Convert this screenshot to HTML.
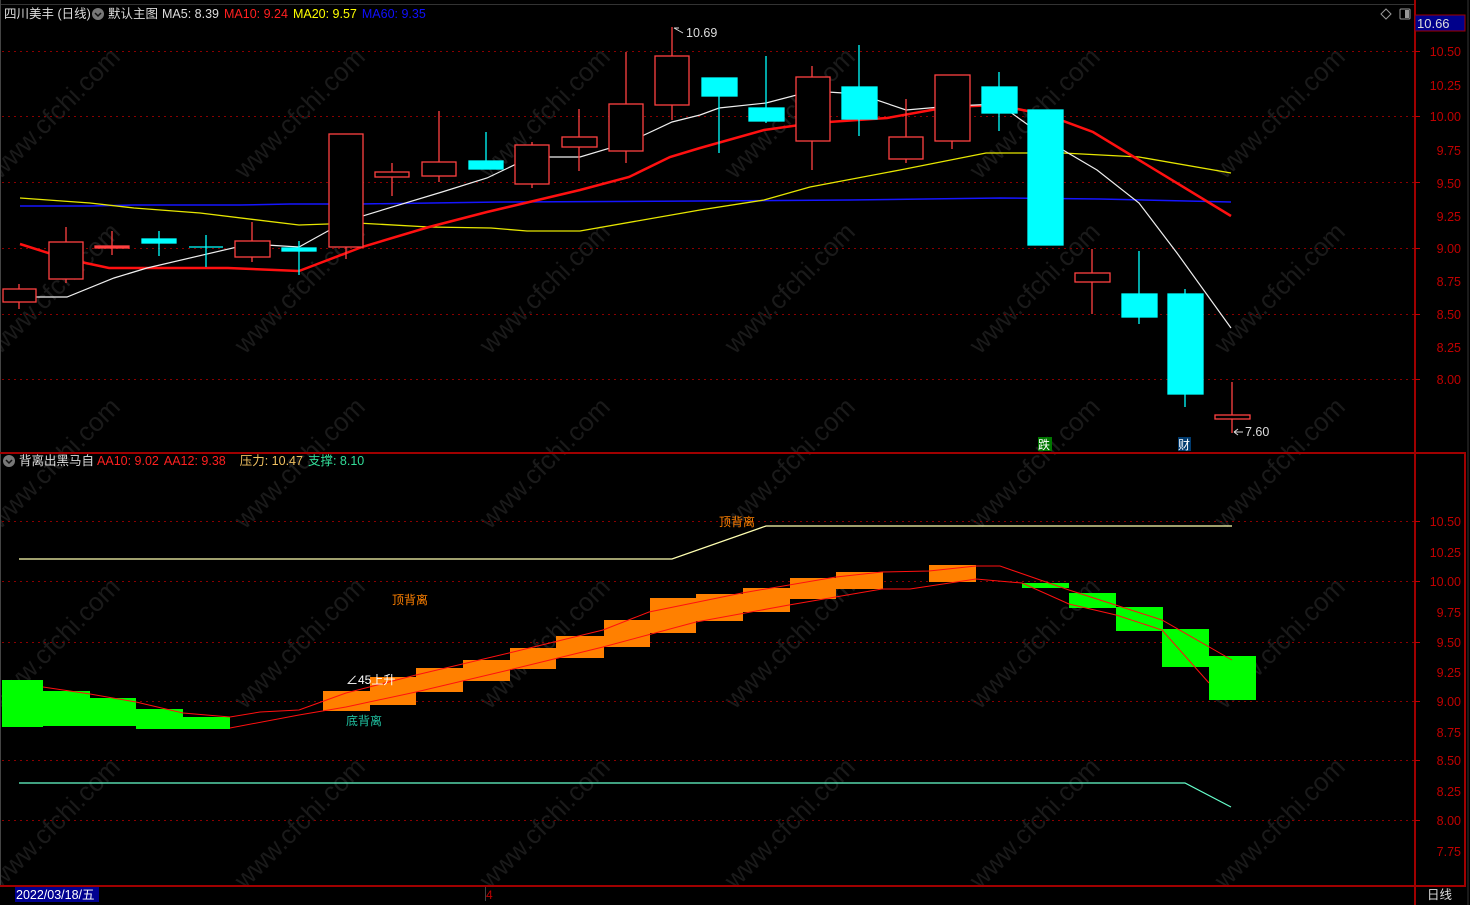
<!DOCTYPE html>
<html><head><meta charset="utf-8"><style>
html,body{margin:0;padding:0;background:#000;width:1470px;height:905px;overflow:hidden}
svg{display:block}
text{font-family:"Liberation Sans","Noto Sans CJK SC",sans-serif}
</style></head><body>
<svg width="1470" height="905" viewBox="0 0 1470 905" xmlns="http://www.w3.org/2000/svg">
<rect width="1470" height="905" fill="#000"/>
<g fill="#1a1a1a" font-size="26" font-family="Liberation Sans,sans-serif">
<text transform="translate(0,180) rotate(-45)">www.cfchi.com</text>
<text transform="translate(245,180) rotate(-45)">www.cfchi.com</text>
<text transform="translate(490,180) rotate(-45)">www.cfchi.com</text>
<text transform="translate(735,180) rotate(-45)">www.cfchi.com</text>
<text transform="translate(980,180) rotate(-45)">www.cfchi.com</text>
<text transform="translate(1225,180) rotate(-45)">www.cfchi.com</text>
<text transform="translate(0,355) rotate(-45)">www.cfchi.com</text>
<text transform="translate(245,355) rotate(-45)">www.cfchi.com</text>
<text transform="translate(490,355) rotate(-45)">www.cfchi.com</text>
<text transform="translate(735,355) rotate(-45)">www.cfchi.com</text>
<text transform="translate(980,355) rotate(-45)">www.cfchi.com</text>
<text transform="translate(1225,355) rotate(-45)">www.cfchi.com</text>
<text transform="translate(0,530) rotate(-45)">www.cfchi.com</text>
<text transform="translate(245,530) rotate(-45)">www.cfchi.com</text>
<text transform="translate(490,530) rotate(-45)">www.cfchi.com</text>
<text transform="translate(735,530) rotate(-45)">www.cfchi.com</text>
<text transform="translate(980,530) rotate(-45)">www.cfchi.com</text>
<text transform="translate(1225,530) rotate(-45)">www.cfchi.com</text>
<text transform="translate(0,710) rotate(-45)">www.cfchi.com</text>
<text transform="translate(245,710) rotate(-45)">www.cfchi.com</text>
<text transform="translate(490,710) rotate(-45)">www.cfchi.com</text>
<text transform="translate(735,710) rotate(-45)">www.cfchi.com</text>
<text transform="translate(980,710) rotate(-45)">www.cfchi.com</text>
<text transform="translate(1225,710) rotate(-45)">www.cfchi.com</text>
<text transform="translate(0,890) rotate(-45)">www.cfchi.com</text>
<text transform="translate(245,890) rotate(-45)">www.cfchi.com</text>
<text transform="translate(490,890) rotate(-45)">www.cfchi.com</text>
<text transform="translate(735,890) rotate(-45)">www.cfchi.com</text>
<text transform="translate(980,890) rotate(-45)">www.cfchi.com</text>
<text transform="translate(1225,890) rotate(-45)">www.cfchi.com</text>
</g>
<line x1="0" y1="4.5" x2="1414" y2="4.5" stroke="#333" stroke-width="1"/>
<line x1="0.5" y1="0" x2="0.5" y2="886" stroke="#444"/>
<g stroke="#8a0000" stroke-dasharray="2,4" stroke-width="1">
<line x1="2" y1="51.5" x2="1414" y2="51.5"/><line x1="2" y1="116.5" x2="1414" y2="116.5"/>
<line x1="2" y1="182.5" x2="1414" y2="182.5"/><line x1="2" y1="248.5" x2="1414" y2="248.5"/>
<line x1="2" y1="314.5" x2="1414" y2="314.5"/><line x1="2" y1="379.5" x2="1414" y2="379.5"/>
<line x1="2" y1="521.5" x2="1414" y2="521.5"/><line x1="2" y1="581.5" x2="1414" y2="581.5"/>
<line x1="2" y1="642.5" x2="1414" y2="642.5"/><line x1="2" y1="701.5" x2="1414" y2="701.5"/>
<line x1="2" y1="760.5" x2="1414" y2="760.5"/><line x1="2" y1="820.5" x2="1414" y2="820.5"/>
</g>
<g stroke="#a00000" stroke-width="2">
<line x1="0" y1="453" x2="1466" y2="453"/>
<line x1="0" y1="886" x2="1466" y2="886"/>
<line x1="1415" y1="0" x2="1415" y2="905"/>
<line x1="1465" y1="453" x2="1465" y2="886"/>
</g>
<line x1="1468" y1="0" x2="1468" y2="905" stroke="#333"/>
<g fill="#c00000" font-size="12.5" text-anchor="end">
<text x="1461" y="56">10.50</text><text x="1461" y="90">10.25</text><text x="1461" y="121">10.00</text>
<text x="1461" y="155">9.75</text><text x="1461" y="188">9.50</text><text x="1461" y="221">9.25</text>
<text x="1461" y="253">9.00</text><text x="1461" y="286">8.75</text><text x="1461" y="319">8.50</text>
<text x="1461" y="352">8.25</text><text x="1461" y="384">8.00</text>
<text x="1461" y="526">10.50</text><text x="1461" y="557">10.25</text><text x="1461" y="586">10.00</text>
<text x="1461" y="617">9.75</text><text x="1461" y="647">9.50</text><text x="1461" y="677">9.25</text>
<text x="1461" y="706">9.00</text><text x="1461" y="737">8.75</text><text x="1461" y="765">8.50</text>
<text x="1461" y="796">8.25</text><text x="1461" y="825">8.00</text><text x="1461" y="856">7.75</text>
</g>
<g stroke="#c00000"><line x1="1415" y1="51.5" x2="1420" y2="51.5"/><line x1="1415" y1="116.5" x2="1420" y2="116.5"/><line x1="1415" y1="182.5" x2="1420" y2="182.5"/><line x1="1415" y1="248.5" x2="1420" y2="248.5"/><line x1="1415" y1="314.5" x2="1420" y2="314.5"/><line x1="1415" y1="379.5" x2="1420" y2="379.5"/><line x1="1415" y1="521.5" x2="1420" y2="521.5"/><line x1="1415" y1="581.5" x2="1420" y2="581.5"/><line x1="1415" y1="642.5" x2="1420" y2="642.5"/><line x1="1415" y1="701.5" x2="1420" y2="701.5"/><line x1="1415" y1="760.5" x2="1420" y2="760.5"/><line x1="1415" y1="820.5" x2="1420" y2="820.5"/></g>
<rect x="1415" y="15" width="50" height="16" fill="#00008b" stroke="#a00000"/>
<text x="1417" y="28" fill="#ddd" font-size="13">10.66</text>
<path d="M1386 9 L1391 14 L1386 19 L1381 14 Z" fill="none" stroke="#999"/>
<rect x="1400" y="9" width="10" height="10" rx="1" fill="none" stroke="#999"/><rect x="1405" y="10" width="4" height="8" fill="#999"/>

<text x="4" y="18" font-size="12.5" fill="#ddd">四川美丰 (日线)</text>
<circle cx="98" cy="14" r="6" fill="#777"/><path d="M95 13 L98 16 L101 13" stroke="#111" fill="none" stroke-width="1.5"/>
<text x="108" y="18" font-size="12.5"><tspan fill="#ddd">默认主图</tspan><tspan fill="#ddd" dx="4">MA5: 8.39</tspan><tspan fill="#ff2020" dx="5">MA10: 9.24</tspan><tspan fill="#ffff00" dx="5">MA20: 9.57</tspan><tspan fill="#1010ff" dx="5">MA60: 9.35</tspan></text>

<polyline fill="none" stroke="#1515ff" stroke-width="1.5" points="20,206 90,206 135,205 240,205 290,204 360,204 500,202 700,201 850,200 1000,198 1100,199 1231,202"/>
<polyline fill="none" stroke="#e6e600" stroke-width="1.3" points="20,198 90,203 134,208 200,213 299,225 357,223 429,227 491,228 527,231 580,231 700,210 764,200 810,187 900,170 986,153 1063,153 1139,157 1231,173"/>
<polyline fill="none" stroke="#ff1010" stroke-width="2.5" points="20,244 67,259 109,268 228,268 299,271 362,247 429,227 487,212 580,190 629,177 670,157 700,148 764,130 814,123 887,118 948,107 998,105 1047,115 1093,132 1139,160 1231,216"/>
<polyline fill="none" stroke="#eee" stroke-width="1.2" points="20,297 67,297 114,278 147,268 250,244 299,247 346,221 442,192 487,178 531,157 580,157 627,143 672,122 700,115 719,108 766,103 812,91 859,94 906,110 952,106 999,104 1063,150 1097,170 1139,203 1177,253 1231,328"/>

<g stroke="#ff4040" stroke-width="1.3" fill="#000">
<line x1="19" y1="284" x2="19" y2="309"/><rect x="3" y="289" width="33" height="13"/>
<line x1="66" y1="227" x2="66" y2="283"/><rect x="49" y="242" width="34" height="37"/>
<line x1="112" y1="231" x2="112" y2="255"/><rect x="95" y="246" width="34" height="2" fill="#ff4040"/>
<line x1="252" y1="222" x2="252" y2="262"/><rect x="235" y="241" width="35" height="16"/>
<line x1="346" y1="247" x2="346" y2="259"/><rect x="329" y="134" width="34" height="113"/>
<line x1="392" y1="163" x2="392" y2="196"/><rect x="375" y="172" width="34" height="5"/>
<line x1="439" y1="111" x2="439" y2="182"/><rect x="422" y="162" width="34" height="14"/>
<line x1="532" y1="142" x2="532" y2="188"/><rect x="515" y="145" width="34" height="39"/>
<line x1="579" y1="109" x2="579" y2="171"/><rect x="562" y="137" width="35" height="10"/>
<line x1="626" y1="52" x2="626" y2="163"/><rect x="609" y="104" width="34" height="47"/>
<line x1="672" y1="27" x2="672" y2="120"/><rect x="655" y="56" width="34" height="49"/>
<line x1="812" y1="66" x2="812" y2="170"/><rect x="796" y="77" width="34" height="64"/>
<line x1="906" y1="99" x2="906" y2="163"/><rect x="889" y="137" width="34" height="22"/>
<line x1="952" y1="141" x2="952" y2="149"/><rect x="935" y="75" width="35" height="66"/>
<line x1="1092" y1="249" x2="1092" y2="314"/><rect x="1075" y="273" width="35" height="9"/>
<line x1="1232" y1="382" x2="1232" y2="433"/><rect x="1215" y="415" width="35" height="4"/>
</g>
<g stroke="#00ffff" stroke-width="1.3" fill="#00ffff">
<line x1="159" y1="231" x2="159" y2="256"/><rect x="142" y="239" width="34" height="4"/>
<line x1="206" y1="235" x2="206" y2="267"/><line x1="189" y1="247" x2="223" y2="247"/>
<line x1="299" y1="241" x2="299" y2="275"/><rect x="282" y="248" width="34" height="3"/>
<line x1="486" y1="132" x2="486" y2="161"/><rect x="469" y="161" width="34" height="8"/>
<line x1="719" y1="96" x2="719" y2="153"/><rect x="702" y="78" width="35" height="18"/>
<line x1="766" y1="56" x2="766" y2="123"/><rect x="749" y="108" width="35" height="13"/>
<line x1="859" y1="45" x2="859" y2="136"/><rect x="842" y="87" width="35" height="32"/>
<line x1="999" y1="72" x2="999" y2="131"/><rect x="982" y="87" width="35" height="26"/>
<rect x="1028" y="110" width="35" height="135"/>
<line x1="1139" y1="251" x2="1139" y2="324"/><rect x="1122" y="294" width="35" height="23"/>
<line x1="1185" y1="289" x2="1185" y2="407"/><rect x="1168" y="294" width="35" height="100"/>
</g>
<path d="M674 28 L679 28 M674 28 L683 33" stroke="#ddd" fill="none"/>
<text x="686" y="37" fill="#ddd" font-size="12.5">10.69</text>
<path d="M1234 432 L1243 432 M1234 432 L1238 429 M1234 432 L1238 435" stroke="#ddd" fill="none"/>
<text x="1245" y="436" fill="#ddd" font-size="12.5">7.60</text>
<rect x="1038" y="437" width="14" height="14" fill="#007700"/>
<text x="1038" y="449" fill="#fff" font-size="12">跌</text>
<rect x="1178" y="437" width="13" height="14" fill="#003a6e"/>
<text x="1178" y="449" fill="#fff" font-size="12">财</text>

<circle cx="9" cy="461" r="6" fill="#777"/><path d="M6 460 L9 463 L12 460" stroke="#111" fill="none" stroke-width="1.5"/>
<text x="19" y="465" font-size="12.5"><tspan fill="#ddd">背离出黑马自</tspan><tspan fill="#ff2020" dx="3">AA10: 9.02</tspan><tspan fill="#ff2020" dx="5">AA12: 9.38</tspan><tspan fill="#f0c060" dx="14">压力: 10.47</tspan><tspan fill="#33dd99" dx="5">支撑: 8.10</tspan></text>

<polyline fill="none" stroke="#ffffb0" stroke-width="1.2" points="19,559 672,559 766,526 1232,526"/>
<polyline fill="none" stroke="#66ffcc" stroke-width="1.2" points="19,783 1185,783 1231,807"/>
<g fill="#00ff00">
<rect x="2" y="680" width="41" height="47"/><rect x="43" y="691" width="47" height="35"/>
<rect x="90" y="698" width="46" height="28"/><rect x="136" y="709" width="47" height="20"/>
<rect x="183" y="717" width="47" height="12"/>
<rect x="1022" y="583" width="47" height="5"/><rect x="1069" y="593" width="47" height="15"/>
<rect x="1116" y="607" width="47" height="24"/><rect x="1162" y="629" width="47" height="38"/>
<rect x="1209" y="656" width="47" height="44"/>
</g>
<g fill="#ff8000">
<rect x="323" y="691" width="47" height="20"/><rect x="370" y="677" width="46" height="28"/>
<rect x="416" y="668" width="47" height="24"/><rect x="463" y="660" width="47" height="21"/>
<rect x="510" y="648" width="46" height="21"/><rect x="556" y="636" width="48" height="22"/>
<rect x="604" y="620" width="46" height="27"/><rect x="650" y="598" width="46" height="35"/>
<rect x="696" y="594" width="47" height="27"/><rect x="743" y="588" width="47" height="24"/>
<rect x="790" y="578" width="46" height="21"/><rect x="836" y="572" width="47" height="17"/>
<rect x="929" y="565" width="47" height="17"/>
</g>
<polyline fill="none" stroke="#ff1010" stroke-width="1" points="43,687 90,694 136,702 183,713 230,717 260,712 299,710 346,693 416,675 509,653 603,630 649,612 742,593 836,577 882,572 929,571 976,566 1000,566 1069,590 1162,620 1232,660"/>
<polyline fill="none" stroke="#ff1010" stroke-width="1" points="230,728 299,715 346,707 416,692 509,670 603,647 696,622 789,605 882,589 910,589 976,579 1022,583 1069,604 1116,615 1162,630 1209,683"/>
<text x="392" y="604" fill="#ff8000" font-size="12">顶背离</text>
<text x="719" y="526" fill="#ff8000" font-size="12">顶背离</text>
<text x="346" y="684" fill="#fff" font-size="12">∠45上升</text>
<text x="346" y="725" fill="#20c0a0" font-size="12">底背离</text>

<rect x="15" y="887" width="84" height="15" fill="#000090"/>
<text x="16" y="899" fill="#fff" font-size="12.5">2022/03/18/五</text>
<line x1="485.5" y1="887" x2="485.5" y2="901" stroke="#444"/>
<text x="486" y="899" fill="#c00000" font-size="12">4</text>
<text x="1427" y="899" fill="#ddd" font-size="12.5">日线</text>
</svg>
</body></html>
